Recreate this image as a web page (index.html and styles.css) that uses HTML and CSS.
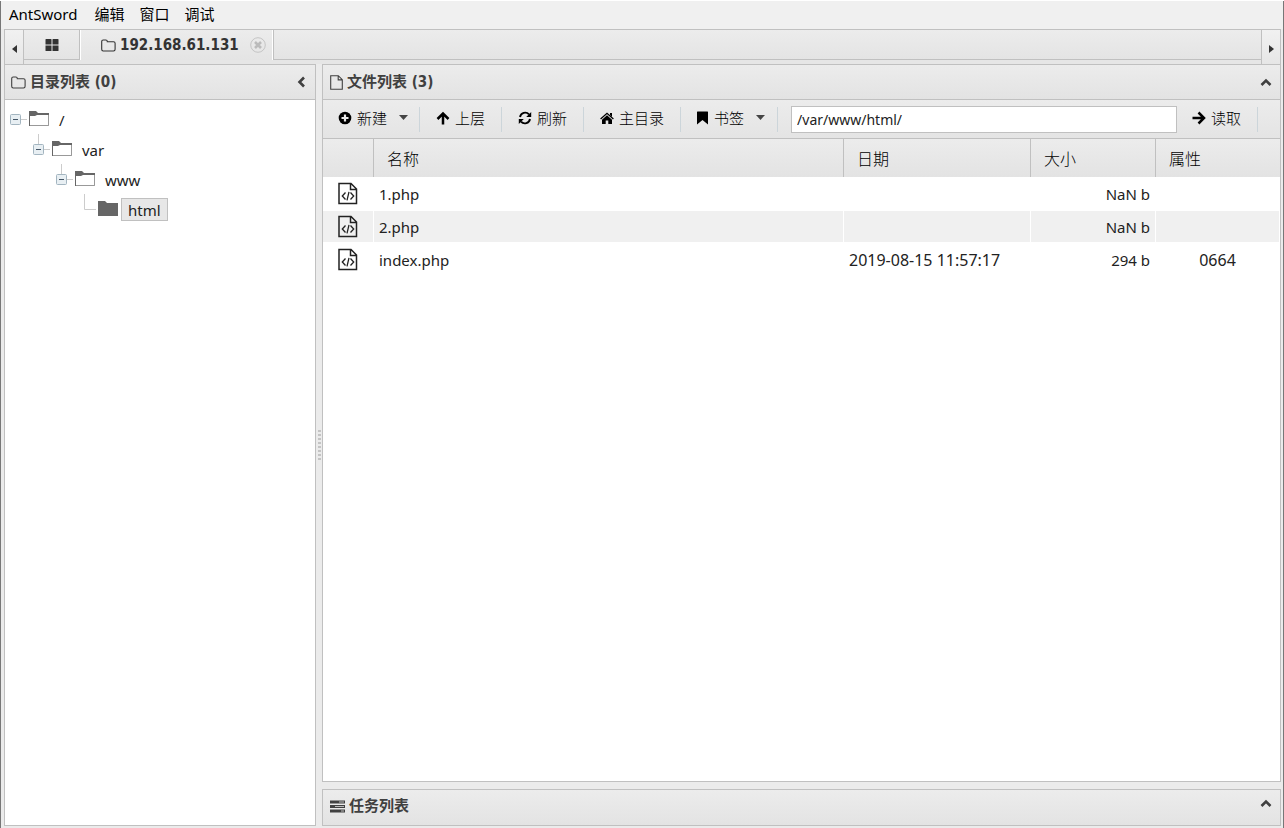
FILE: index.html
```html
<!DOCTYPE html>
<html lang="zh-CN">
<head>
<meta charset="utf-8">
<title>AntSword</title>
<link rel="stylesheet" href="styles.css">
</head>
<body>
<svg class="defs" aria-hidden="true">
  <symbol id="folder-o" viewBox="0 0 15 13"><path d="M.7 2.6Q.7 1 2.2 1h2.6q1.5 0 1.5 1.4v.4h6.2q1.6 0 1.6 1.5v6q0 1.7-1.6 1.7H2.2Q.7 12 .7 10.300z" fill="none" stroke="currentColor" stroke-width="1.100"/></symbol>
  <symbol id="file-o" viewBox="0 0 13 15"><path d="M.7.700h7.600l4 4v9.600H.7zM8.200.900v4h4" fill="none" stroke="currentColor" stroke-width="1.100"/></symbol>
  <symbol id="code" viewBox="0 0 20 23"><path d="M1 1.500h12L18.500 7v14.500H1zM12.500 1.500v6h6" fill="none" stroke="#222" stroke-width="1.500"/><path d="M7.500 10.500 4.300 14l3.200 3.500M12.500 10.500l3.200 3.500-3.200 3.500M11 9.800 9 18.300" fill="none" stroke="#222" stroke-width="1.300"/></symbol>
  <symbol id="folder-open" viewBox="0 0 20 16"><path d="M.5 3.500h19v11H.5z" fill="#fff" stroke="#aaa"/><path d="M0 0h7l2 2h11v2H8L6 5H1v10H0z" fill="#666"/><path d="M1 14.500h18.500V4" fill="none" stroke="#999"/></symbol>
  <symbol id="folder-full" viewBox="0 0 20 16"><path d="M0 0h7l2 2h11v13H0z" fill="#666"/></symbol>
  <symbol id="up" viewBox="0 0 12 10"><path d="m1.500 8 4.500-4.500L10.500 8" fill="none" stroke="currentColor" stroke-width="2.600"/></symbol>
  <symbol id="caret" viewBox="0 0 9 5"><path d="M0 0h9L4.500 5z" fill="currentColor"/></symbol>
</svg>

<nav class="menu">
  <button class="brand">AntSword</button><button>编辑</button><button>窗口</button><button>调试</button>
</nav>

<div class="tabs">
  <button class="scroll" aria-label="向左"><svg width="5" height="8" viewBox="0 0 5 8"><path d="M5 0v8L0 4z"/></svg></button>
  <button class="tab home" aria-label="主页"><svg width="14" height="12" viewBox="0 0 14 12"><path d="M1 0h5q.500 0 .5.500v5H.5v-5Q.5 0 1 0zM8 0h5q.500 0 .5.500v5h-6v-5Q7.500 0 8 0zM.5 6.500h6V12H1q-.5 0-.5-.5zM7.500 6.500h6v5q0 .5-.5.500H7.500z"/></svg></button>
  <div class="tab active">
    <button class="title"><svg width="15" height="13"><use href="#folder-o"/></svg>192.168.61.131</button>
    <button class="close" aria-label="关闭"><svg width="16" height="16" viewBox="0 0 16 16"><circle cx="8" cy="8" r="7.300" fill="none" stroke="#c4c4c4"/><path d="m5 5 6 6M11 5l-6 6" stroke="#bbb" stroke-width="2.600"/></svg></button>
  </div>
  <div class="tab rest"></div>
  <button class="scroll" aria-label="向右"><svg width="5" height="8" viewBox="0 0 5 8"><path d="M0 0v8l5-4z"/></svg></button>
</div>

<main class="main">
  <section class="panel side">
    <header class="head">
      <svg width="15" height="13"><use href="#folder-o"/></svg><h2>目录列表 (0)</h2>
      <button class="fold" aria-label="折叠"><svg width="10" height="12" viewBox="0 0 10 12"><path d="M8 1.500 3.500 6 8 10.500" fill="none" stroke="currentColor" stroke-width="2.600"/></svg></button>
    </header>
    <ul class="tree">
      <li>
        <div class="node"><button class="toggle" aria-label="收起"><svg width="19" height="30" viewBox="0 0 19 30"><path d="M11 15.500h6" stroke="#ccc"/><rect x=".5" y="10.500" width="10" height="10" rx="1" fill="#e8eff3" stroke="#a3b5c0"/><path d="M3 15.500h5" stroke="#456"/></svg></button><svg width="20" height="16"><use href="#folder-open"/></svg><span class="label">/</span></div>
        <ul>
          <li>
            <div class="node"><button class="toggle" aria-label="收起"><svg width="19" height="30" viewBox="0 0 19 30"><path d="M5.500 0v10M11 15.500h6" stroke="#ccc"/><rect x=".5" y="10.500" width="10" height="10" rx="1" fill="#e8eff3" stroke="#a3b5c0"/><path d="M3 15.500h5" stroke="#456"/></svg></button><svg width="20" height="16"><use href="#folder-open"/></svg><span class="label">var</span></div>
            <ul>
              <li>
                <div class="node"><button class="toggle" aria-label="收起"><svg width="19" height="30" viewBox="0 0 19 30"><path d="M5.500 0v10M11 15.500h6" stroke="#ccc"/><rect x=".5" y="10.500" width="10" height="10" rx="1" fill="#e8eff3" stroke="#a3b5c0"/><path d="M3 15.500h5" stroke="#456"/></svg></button><svg width="20" height="16"><use href="#folder-open"/></svg><span class="label">www</span></div>
                <ul>
                  <li>
                    <div class="node"><svg width="19" height="30" viewBox="0 0 19 30"><path d="M5.500 0v15.500H17" fill="none" stroke="#ccc"/></svg><svg width="20" height="16"><use href="#folder-full"/></svg><span class="label selected">html</span></div>
                  </li>
                </ul>
              </li>
            </ul>
          </li>
        </ul>
      </li>
    </ul>
  </section>

  <div class="splitter"><span class="grip"></span></div>

  <div class="content">
    <section class="panel files">
      <header class="head">
        <svg width="13" height="15"><use href="#file-o"/></svg><h2>文件列表 (3)</h2>
        <button class="fold" aria-label="折叠"><svg width="12" height="10"><use href="#up"/></svg></button>
      </header>
      <div class="toolbar">
        <button class="tool new"><svg width="14" height="14" viewBox="0 0 14 14"><circle cx="7" cy="7" r="6.300"/><path d="M7 3.500v7M3.500 7h7" stroke="#eaeaea" stroke-width="2.200"/></svg>新建<svg class="caret" width="9" height="5"><use href="#caret"/></svg></button>
        <button class="tool"><svg width="14" height="14" viewBox="0 0 14 14"><path d="M1.500 8 7 2.500 12.500 8M7 3v10.500" fill="none" stroke="#000" stroke-width="2.500"/></svg>上层</button>
        <button class="tool"><svg width="14" height="14" viewBox="0 0 14 14"><path d="M2 6a5.200 5.200 0 0 1 9-2.600M12 8a5.200 5.200 0 0 1-9 2.600" fill="none" stroke="#000" stroke-width="1.900"/><path d="M13.200 1v5H8.200zM.8 13V8h5z"/></svg>刷新</button>
        <button class="tool"><svg width="14" height="14" viewBox="0 0 14 14"><path d="M.6 8 7 2.300 13.400 8" fill="none" stroke="#000" stroke-width="1.300"/><path d="M10 2h2v4l-2-2zM7 4.300l5 4.400V13H8.300V9.500H5.700V13H2V8.700z"/></svg>主目录</button>
        <button class="tool marks"><svg width="13" height="14" viewBox="0 0 13 14"><path d="M1.500.500h10q.500 0 .5.500v12.500L6.500 9 1 13.500V1q0-.5.500-.5z"/></svg>书签<svg class="caret" width="9" height="5"><use href="#caret"/></svg></button>
        <input class="path" type="text" aria-label="路径" value="/var/www/html/">
        <button class="tool read"><svg width="14" height="14" viewBox="0 0 14 14"><path d="M6.500 1.500 12 7l-5.500 5.500M.5 7H11" fill="none" stroke="#000" stroke-width="2.500"/></svg>读取</button>
      </div>
      <table class="grid">
        <colgroup><col class="c-icon"><col><col class="c-date"><col class="c-size"><col class="c-attr"></colgroup>
        <thead><tr><th></th><th>名称</th><th>日期</th><th>大小</th><th>属性</th></tr></thead>
        <tbody>
          <tr><td class="icon"><svg width="20" height="23"><use href="#code"/></svg></td><td>1.php</td><td class="date"></td><td class="size">NaN b</td><td class="attr"></td></tr>
          <tr><td class="icon"><svg width="20" height="23"><use href="#code"/></svg></td><td>2.php</td><td class="date"></td><td class="size">NaN b</td><td class="attr"></td></tr>
          <tr><td class="icon"><svg width="20" height="23"><use href="#code"/></svg></td><td>index.php</td><td class="date">2019-08-15 11:57:17</td><td class="size">294 b</td><td class="attr">0664</td></tr>
        </tbody>
      </table>
    </section>
    <section class="panel tasks">
      <header class="head">
        <svg width="15" height="13" viewBox="0 0 15 13"><path d="M0 .5h15v3H0zM0 5h15v3H0zM0 9.500h15v3H0z"/><path d="M9 1.500h5v1H9zM5 6h9v1H5zM11 10.500h3v1h-3z" fill="#bbb"/></svg><h2>任务列表</h2>
        <button class="fold" aria-label="展开"><svg width="12" height="10"><use href="#up"/></svg></button>
      </header>
    </section>
  </div>
</main>
</body>
</html>
```
FILE: styles.css
```css
* { box-sizing: border-box; }

body {
  margin: 0;
  height: 100vh;
  display: flex;
  flex-direction: column;
  padding: 0 3px 2px 4px;
  border-top: 1px solid #fff;
  background: #ebebeb;
  box-shadow: inset 1px 0 #777, inset -1px 0 #777;
  color: #222;
  font: 15px/22px "Noto Sans", "Noto Sans CJK SC", sans-serif;
  overflow: hidden;
}

.defs { position: absolute; width: 0; height: 0; }
svg { display: block; flex: none; fill: currentColor; }
button {
  display: flex;
  align-items: center;
  margin: 0;
  padding: 0;
  border: 0;
  background: none;
  color: inherit;
  font: inherit;
}
ul { margin: 0; padding: 0; list-style: none; }

/* Menu bar */
.menu {
  display: flex;
  gap: 15px;
  height: 28px;
  flex: none;
  margin: 0 -2px 0 -3px;
  padding: 0 8px 2px;
  background: #f0f0f0;
  color: #000;
}
.brand { margin-right: 2px; }

/* Tab strip */
.tabs {
  display: flex;
  flex: none;
  height: 35px;
  border: 1px solid #c0c0c0;
  border-bottom: 0;
  background: #e6e6e6;
  color: #333;
}
.scroll {
  width: 19px;
  justify-content: center;
  padding-top: 3px;
  background: linear-gradient(#f1f1f1, #e6e6e6);
  border-right: 1px solid #c0c0c0;
}
.scroll:last-child { border-right: 0; border-left: 1px solid #c0c0c0; }
.tab {
  height: 30px;
  background: linear-gradient(#ececec, #e4e4e4);
  border-bottom: 1px solid #c0c0c0;
}
.home { width: 56px; justify-content: center; border-right: 1px solid #c0c0c0; }
.active {
  display: flex;
  align-items: center;
  gap: 11px;
  padding: 0 7px 0 21px;
  border-bottom: 0;
  border-right: 1px solid #c0c0c0;
  box-shadow: inset 1px 0 #fff, inset -1px 0 #fff;
}
.title { gap: 4px; font: bold 15px/20px "DejaVu Sans Condensed", "DejaVu Sans", sans-serif; }
.rest { flex: 1; }

/* Panels */
.main { display: flex; flex: 1; min-height: 0; }
.panel { border: 1px solid #c0c0c0; background: #fff; }
.side { width: 312px; flex: none; }
.head {
  display: flex;
  align-items: center;
  gap: 4px;
  height: 35px;
  padding: 0 9px 0 6px;
  background: linear-gradient(#ececec, #e3e3e3);
  border-bottom: 1px solid #c0c0c0;
  color: #404040;
}
.head h2 {
  flex: 1;
  margin: 0;
  font: bold 15px/20px "DejaVu Sans Condensed", "Noto Sans CJK SC", sans-serif;
}

.splitter { width: 6px; flex: none; display: flex; align-items: center; justify-content: center; }
.grip {
  width: 3px;
  height: 30px;
  background: repeating-linear-gradient(#c4c4c4 0 2px, transparent 2px 4px);
}

.content { display: flex; flex-direction: column; gap: 7px; flex: 1; min-width: 0; }
.files { flex: 1; min-height: 0; }
.files .head, .tasks .head { padding-left: 7px; padding-right: 8px; }
.tasks .head { padding-bottom: 3px; border-bottom: 0; }
.tasks .fold { padding-bottom: 6px; }

/* Directory tree */
.tree { padding: 4px 5px; }
.tree ul { padding-left: 23px; }
.node { display: flex; align-items: center; height: 30px; }
.label { margin-left: 3px; padding: 1px 6px 0; border: 1px solid transparent; line-height: 20px; }
.selected { background: #e7e7e7; border-color: #c0c0c0; }

/* Toolbar */
.toolbar {
  display: flex;
  align-items: center;
  height: 39px;
  background: linear-gradient(#ececec, #e4e4e4);
  border-bottom: 1px solid #c0c0c0;
  color: #000;
  font-weight: 300;
}
.tool {
  height: 25px;
  gap: 5px;
  padding: 0 16px 3px;
  border-right: 1px solid #ccd5da;
}
.new { padding-left: 15px; padding-right: 11px; }
.marks { padding-right: 12px; padding-left: 15px; }
.caret { margin-left: 7px; color: #444; }
.path {
  flex: 1;
  min-width: 0;
  height: 27px;
  margin-left: 13px;
  padding: 0 5px;
  border: 1px solid #c0c0c0;
  background: #fff;
  color: #222;
  font: 14px/22px "Noto Sans", sans-serif;
}
.read { margin-right: 22px; padding-left: 15px; }

/* File grid */
.grid { width: 100%; table-layout: fixed; border-collapse: separate; border-spacing: 0; }
.c-icon { width: 51px; }
.c-date { width: 187px; }
.c-size { width: 125px; }
.c-attr { width: 124px; }
.grid th {
  height: 38px;
  padding: 1px 13px 0;
  background: linear-gradient(#ececec, #e3e3e3);
  border-right: 1px solid #c0c0c0;
  color: #000;
  font-size: 16px;
  font-weight: 300;
  text-align: left;
}
.grid th:last-child { border-right: 0; }
.grid td {
  height: 33px;
  padding: 0 5px;
  border: solid #fff;
  border-width: 1px 1px 1px 0;
}
.grid tr:nth-child(even) td { background: #f0f0f0; }
.grid .icon { padding: 0 0 0 15px; }
.grid .date, .grid .attr { font-size: 16px; }
.grid .size { text-align: right; }
.grid .attr { text-align: center; }
```
